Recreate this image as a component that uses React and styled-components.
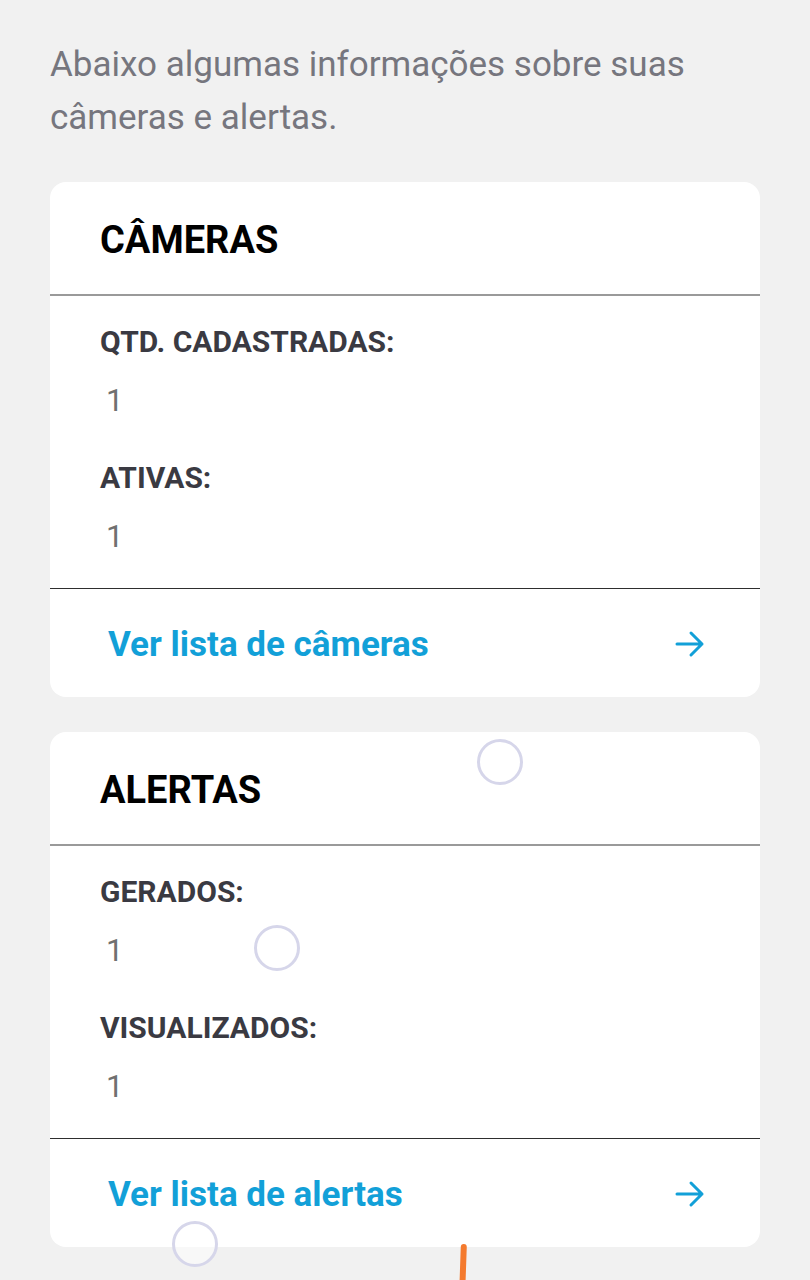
import styled, { createGlobalStyle } from "styled-components"

const GlobalStyle = createGlobalStyle`
  html, body {
    margin: 0;
    padding: 0;
    background: #f1f1f1;
  }
  * {
    box-sizing: border-box;
  }
`

const sections = [
    {
        title: "CÂMERAS",
        rows: [
            { label: "QTD. CADASTRADAS:", value: 1 },
            { label: "ATIVAS:", value: 1 },
        ],
        link: "Ver lista de câmeras",
    },
    {
        title: "ALERTAS",
        rows: [
            { label: "GERADOS:", value: 1 },
            { label: "VISUALIZADOS:", value: 1 },
        ],
        link: "Ver lista de alertas",
    },
]

function Arrow() {
    return (
        <svg width="32" height="30" viewBox="0 0 32 30" fill="none">
            <path d="M3 15h25M17 4l11 11-11 11" stroke="#12a0d8" strokeWidth="3" strokeLinecap="round" strokeLinejoin="round" />
        </svg>
    )
}

function InfoCard({ title, rows, link }) {
    return (
        <Card>
            <CardHeader>{title}</CardHeader>
            <CardBody>
                {rows.map((row) => (
                    <Field key={row.label}>
                        <Label>{row.label}</Label>
                        <Value>{row.value}</Value>
                    </Field>
                ))}
            </CardBody>
            <CardFooter>
                <LinkText>{link}</LinkText>
                <Arrow />
            </CardFooter>
        </Card>
    )
}

export default function App() {
    return (
        <Page>
            <GlobalStyle />
            <Intro>Abaixo algumas informações sobre suas câmeras e alertas.</Intro>
            <CardList>
                {sections.map((s) => (
                    <InfoCard key={s.title} {...s} />
                ))}
            </CardList>
            <Touch x={500} y={762} />
            <Touch x={277} y={948} />
            <Touch x={195} y={1244} />
            <Stroke />
        </Page>
    )
}

const Page = styled.div`
    position: relative;
    min-height: 1280px;
    padding: 38px 50px 0;
    font-family: Roboto, "Noto Sans", sans-serif;
    overflow: hidden;
`
const Intro = styled.p`
    margin: 0;
    font-size: 35px;
    line-height: 53px;
    color: #76767e;
`
const CardList = styled.div`
    display: flex;
    flex-direction: column;
    gap: 35px;
    margin-top: 38px;
`
const Card = styled.div`
    background: #ffffff;
    border-radius: 16px;
    overflow: hidden;
`
const CardHeader = styled.div`
    height: 114px;
    display: flex;
    align-items: center;
    padding: 4px 50px 0;
    font-size: 38px;
    font-weight: 700;
    color: #000000;
    border-bottom: 2px solid #9a9a9a;
`
const CardBody = styled.div`
    display: flex;
    flex-direction: column;
    gap: 39px;
    padding: 28px 50px 31px;
    border-bottom: 1.5px solid #2e2e2e;
`
const Field = styled.div`
    display: flex;
    flex-direction: column;
    gap: 21px;
`
const Label = styled.div`
    font-size: 30px;
    line-height: 36px;
    font-weight: 700;
    color: #3a3a42;
`
const Value = styled.div`
    font-size: 31px;
    line-height: 40px;
    color: #707070;
    padding-left: 6px;
`
const CardFooter = styled.div`
    height: 108px;
    display: flex;
    align-items: center;
    justify-content: space-between;
    padding: 2px 54px 0 58px;
`
const LinkText = styled.span`
    font-size: 35px;
    font-weight: 700;
    color: #12a0d8;
`
const Touch = styled.div`
    position: absolute;
    left: ${(p) => p.x - 23}px;
    top: ${(p) => p.y - 23}px;
    width: 46px;
    height: 46px;
    border-radius: 50%;
    border: 3px solid #d6d6ea;
    background: rgba(255, 255, 255, 0.5);
`
const Stroke = styled.div`
    position: absolute;
    left: 460px;
    top: 1244px;
    width: 6px;
    height: 50px;
    border-radius: 3px;
    background: #f47a2e;
    transform: rotate(2deg);
`
